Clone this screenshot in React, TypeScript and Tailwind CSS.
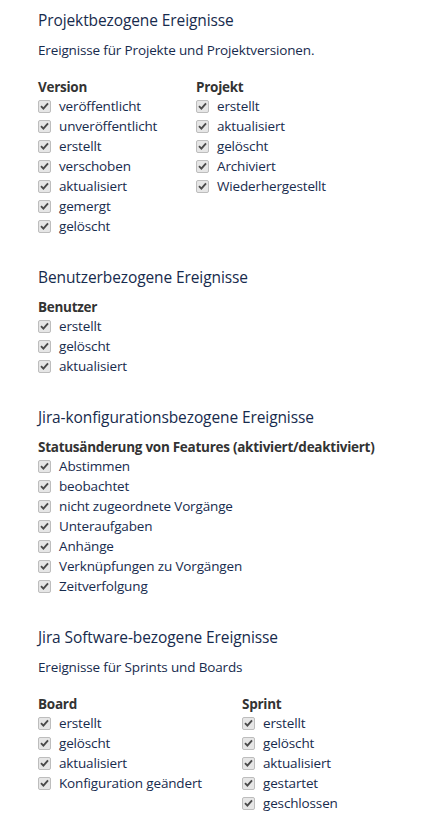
const FONT = "font-['Open_Sans',sans-serif]";

interface Group {
  title: string;
  items: string[];
  width?: string;
}

interface Section {
  heading: string;
  description?: string;
  groups: Group[];
}

const sections: Section[] = [
  {
    heading: 'Projektbezogene Ereignisse',
    description: 'Ereignisse für Projekte und Projektversionen.',
    groups: [
      {
        title: 'Version',
        width: 'w-[158px]',
        items: ['veröffentlicht', 'unveröffentlicht', 'erstellt', 'verschoben', 'aktualisiert', 'gemergt', 'gelöscht'],
      },
      {
        title: 'Projekt',
        items: ['erstellt', 'aktualisiert', 'gelöscht', 'Archiviert', 'Wiederhergestellt'],
      },
    ],
  },
  {
    heading: 'Benutzerbezogene Ereignisse',
    groups: [{ title: 'Benutzer', items: ['erstellt', 'gelöscht', 'aktualisiert'] }],
  },
  {
    heading: 'Jira-konfigurationsbezogene Ereignisse',
    groups: [
      {
        title: 'Statusänderung von Features (aktiviert/deaktiviert)',
        items: [
          'Abstimmen',
          'beobachtet',
          'nicht zugeordnete Vorgänge',
          'Unteraufgaben',
          'Anhänge',
          'Verknüpfungen zu Vorgängen',
          'Zeitverfolgung',
        ],
      },
    ],
  },
  {
    heading: 'Jira Software-bezogene Ereignisse',
    description: 'Ereignisse für Sprints und Boards',
    groups: [
      {
        title: 'Board',
        width: 'w-[204px]',
        items: ['erstellt', 'gelöscht', 'aktualisiert', 'Konfiguration geändert'],
      },
      {
        title: 'Sprint',
        items: ['erstellt', 'gelöscht', 'aktualisiert', 'gestartet', 'geschlossen'],
      },
    ],
  },
];

const CheckBox = () => (
  <span className="flex h-[13px] w-[13px] shrink-0 items-center justify-center rounded-[2px] border border-[#bdbdbd] bg-[#e6e6e6]">
    <svg width="9" height="8" viewBox="0 0 9 8">
      <path d="M1 4.2 L3.4 6.6 L8 1.4" fill="none" stroke="#4a4a4a" strokeWidth="1.9" />
    </svg>
  </span>
);

const EventGroup = ({ group }: { group: Group }) => (
  <div className={group.width ?? ''}>
    <div className="h-[18px] text-[13.5px] font-bold leading-[18px] tracking-[-0.27px] text-[#333333]">
      {group.title}
    </div>
    {group.items.map((item, i) => (
      <div key={i} className="flex h-[20px] items-center gap-[8px]">
        <CheckBox />
        <span className="text-[13.5px] leading-[20px] tracking-[-0.15px] text-[#172b4d]">{item}</span>
      </div>
    ))}
  </div>
);

export default function App() {
  return (
    <div className={`${FONT} min-h-[823px] bg-white pl-[38px] pt-[8px]`}>
      {sections.map((section, i) => (
        <div key={i} className={i > 0 ? 'mt-[29px]' : ''}>
          <h2 className="h-[24px] text-[15.5px] leading-[24px] tracking-[-0.1px] text-[#172b4d]">{section.heading}</h2>
          {section.description && (
            <p className="mt-[8px] h-[20px] text-[13.5px] leading-[20px] tracking-[-0.15px] text-[#172b4d]">
              {section.description}
            </p>
          )}
          <div className={`flex ${section.description ? 'mt-[18px]' : 'mt-[9px]'}`}>
            {section.groups.map((g, j) => (
              <EventGroup key={j} group={g} />
            ))}
          </div>
        </div>
      ))}
    </div>
  );
}
